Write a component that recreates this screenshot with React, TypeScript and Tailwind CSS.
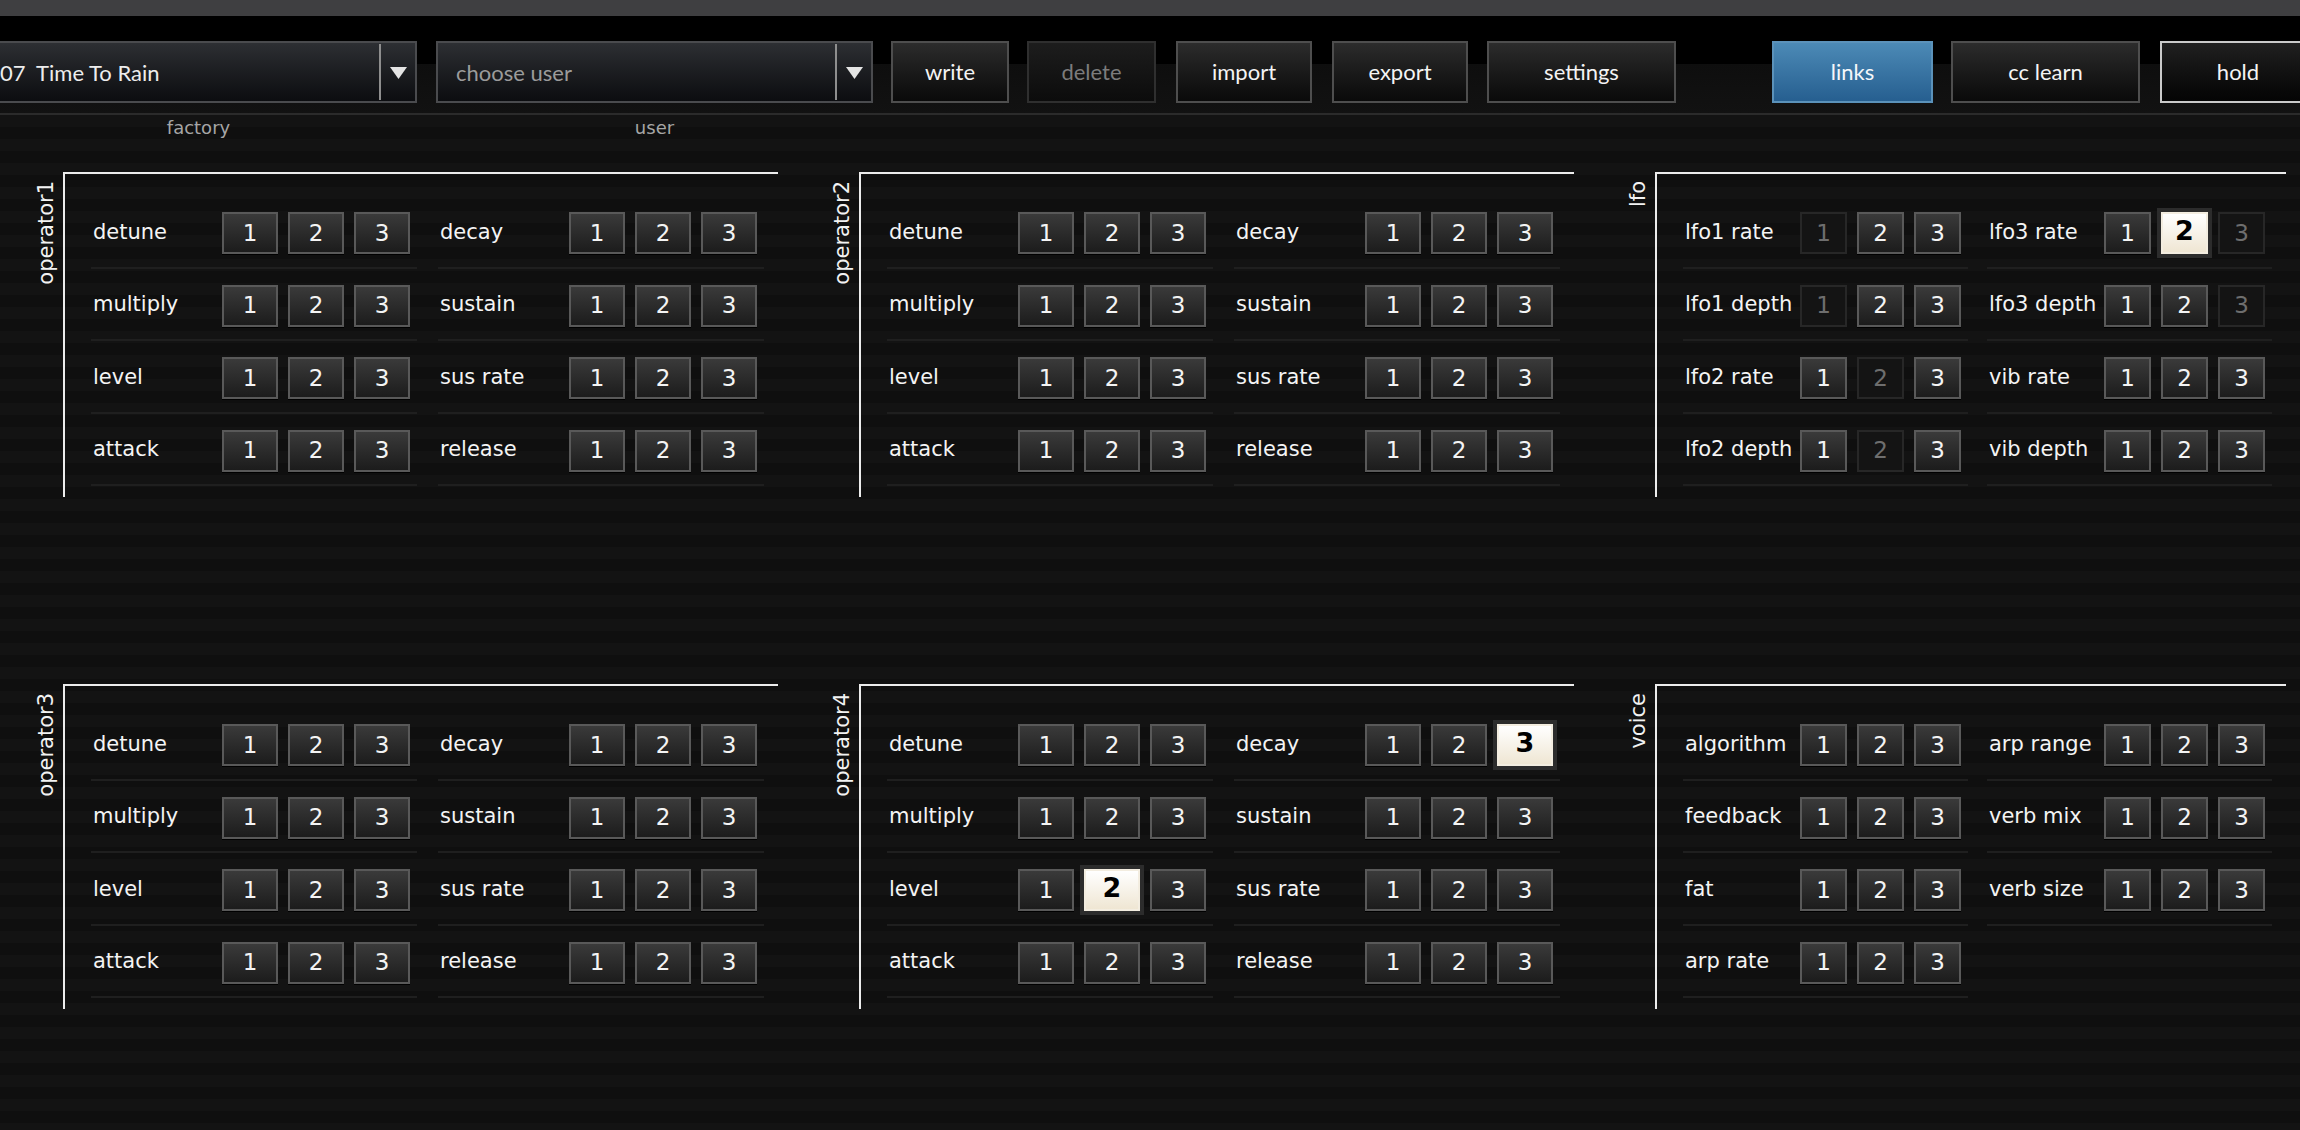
import React from 'react';

type Param = { name: string; off?: number[]; on?: number };
type Column = Param[];

const opRows = (on: Record<string, number> = {}): Column[] => [
  ['detune', 'multiply', 'level', 'attack'].map((name) => ({ name, on: on[name] })),
  ['decay', 'sustain', 'sus rate', 'release'].map((name) => ({ name, on: on[name] })),
];

const lfoCols: Column[] = [
  [
    { name: 'lfo1 rate', off: [1] },
    { name: 'lfo1 depth', off: [1] },
    { name: 'lfo2 rate', off: [2] },
    { name: 'lfo2 depth', off: [2] },
  ],
  [
    { name: 'lfo3 rate', on: 2, off: [3] },
    { name: 'lfo3 depth', off: [3] },
    { name: 'vib rate' },
    { name: 'vib depth' },
  ],
];

const voiceCols: Column[] = [
  [{ name: 'algorithm' }, { name: 'feedback' }, { name: 'fat' }, { name: 'arp rate' }],
  [{ name: 'arp range' }, { name: 'verb mix' }, { name: 'verb size' }],
];

const ValueButton = ({ n, state, wide }: { n: number; state: 'on' | 'off' | 'idle'; wide: boolean }) => {
  const size = wide ? 'w-[56px] h-[42px]' : 'w-[47px] h-[42px]';
  if (state === 'on') {
    return (
      <div
        className={`${size} flex items-center justify-center border-2 border-[#f3ede0] bg-linear-to-b from-[#ffffff] to-[#efe6d3] outline-[4px] outline-solid outline-[#2c2c2c] text-[27px] font-bold leading-none text-black pb-[5px]`}
      >
        {n}
      </div>
    );
  }
  if (state === 'off') {
    return (
      <div
        className={`${size} flex items-center justify-center border-2 border-[#272727] bg-[#141414] text-[23px] leading-none text-[#6e6e6e]`}
      >
        {n}
      </div>
    );
  }
  return (
    <div
      className={`${size} flex items-center justify-center border-2 border-[#595959] bg-linear-to-b from-[#3a3a3a] via-[#2b2b2b] to-[#1c1c1c] text-[23px] leading-none text-[#f4f4f4] shadow-[0_1px_0_#000]`}
    >
      {n}
    </div>
  );
};

const Panel = ({ title, cols, wide }: { title: string; cols: Column[]; wide: boolean }) => (
  <div className="flex shrink-0">
    <div className="w-[40px] flex items-start justify-end pr-[6px] pt-[9px]">
      <div className="[writing-mode:vertical-rl] rotate-180 text-[21px] leading-none text-[#f2f2f2]">{title}</div>
    </div>
    <div
      className={`${wide ? 'w-[715px] gap-[21px]' : 'w-[631px] gap-[19px]'} h-[325px] flex border-l-2 border-t-2 border-[#ececec] pl-[26px] pt-[22px]`}
    >
      {cols.map((col, ci) => (
        <div key={ci} className={`${wide ? 'w-[326px]' : 'w-[285px]'} flex flex-col`}>
          {col.map((p) => (
            <div key={p.name} className="h-[72.5px] shrink-0 border-b-2 border-[#1f1f1f] pt-[16px] pl-[2px]">
              <div className="flex h-[42px] items-center">
                <div className={`${wide ? 'w-[129px]' : 'w-[115px]'} text-[21px] leading-none text-[#f4f4f4] pb-[2px]`}>
                  {p.name}
                </div>
                <div className="flex gap-[10px]">
                  {[1, 2, 3].map((n) => (
                    <ValueButton
                      key={n}
                      n={n}
                      wide={wide}
                      state={p.on === n ? 'on' : p.off?.includes(n) ? 'off' : 'idle'}
                    />
                  ))}
                </div>
              </div>
            </div>
          ))}
        </div>
      ))}
    </div>
  </div>
);

const Dropdown = ({ text, muted, className }: { text: string; muted?: boolean; className: string }) => (
  <div
    className={`${className} shrink-0 w-[437px] h-[62px] flex border-2 border-[#4a4b4e] bg-linear-to-b from-[#2d2f33] to-[#0c0d10]`}
  >
    <div
      className={`flex-1 flex items-center pl-[18px] text-[22px] whitespace-pre ${muted ? 'text-[#9b9b9b]' : 'text-[#ededed]'}`}
    >
      {text}
    </div>
    <div className="w-[2px] my-[1px] bg-[#8e8e8e]" />
    <div className="w-[34px] flex items-center justify-center pt-[2px]">
      <svg width="17" height="12" viewBox="0 0 17 12">
        <polygon points="0,0 17,0 8.5,12" fill="#e4e4e4" />
      </svg>
    </div>
  </div>
);

const ToolButton = ({
  label,
  className,
  variant = 'normal',
}: {
  label: string;
  className: string;
  variant?: 'normal' | 'disabled' | 'blue' | 'hold';
}) => {
  const look = {
    normal: 'border-[#4e4e4e] from-[#2c2c2c] to-[#0a0a0a] text-[#f4f4f4]',
    disabled: 'border-[#2f2f2f] from-[#1d1d1d] to-[#0c0c0c] text-[#7c7c7c]',
    blue: 'border-[#5b92ba] from-[#4c8ab6] to-[#265f90] text-[#f4f7fa]',
    hold: 'border-[#cacaca] from-[#202020] to-[#050505] text-[#f4f4f4]',
  }[variant];
  return (
    <div
      className={`${className} ${look} shrink-0 h-[62px] border-2 bg-linear-to-b flex items-center justify-center text-[22px] pb-[2px]`}
    >
      {label}
    </div>
  );
};

export default function App() {
  return (
    <div className="w-[2300px] h-[1130px] overflow-hidden bg-[#111111] font-['DejaVu_Sans',sans-serif]">
      <div className="h-[16px] bg-[#3f3f41]" />

      {/* toolbar */}
      <div className="h-[97px] pt-[25px] flex bg-[linear-gradient(to_bottom,#000_0px,#000_48px,#0e0e0e_48px,#121212_100%)] font-['Lato',sans-serif] overflow-hidden">
        <Dropdown className="ml-[-20px]" text="07  Time To Rain" />
        <Dropdown className="ml-[19px]" text="choose user" muted />
        <ToolButton className="ml-[18px] w-[118px]" label="write" />
        <ToolButton className="ml-[18px] w-[129px]" label="delete" variant="disabled" />
        <ToolButton className="ml-[20px] w-[136px]" label="import" />
        <ToolButton className="ml-[20px] w-[136px]" label="export" />
        <ToolButton className="ml-[19px] w-[189px]" label="settings" />
        <ToolButton className="ml-[96px] w-[161px]" label="links" variant="blue" />
        <ToolButton className="ml-[18px] w-[189px]" label="cc learn" />
        <ToolButton className="ml-[20px] w-[156px]" label="hold" variant="hold" />
      </div>
      <div className="h-[2px] bg-[#2b2b2b]" />

      <div className="h-[1015px] bg-[repeating-linear-gradient(to_bottom,#131313_0px,#131313_12px,#0f0f0f_12px,#0f0f0f_24px)]">
        {/* bank labels */}
        <div className="flex h-[25px] items-center text-[18px] text-[#a6a6a6]">
          <div className="ml-[-20px] w-[437px] text-center">factory</div>
          <div className="ml-[19px] w-[437px] text-center">user</div>
        </div>

        <div className="pt-[32px] pl-[23px] flex flex-col gap-[187px]">
          <div className="flex gap-[41px]">
            <Panel title="operator1" cols={opRows()} wide />
            <Panel title="operator2" cols={opRows()} wide />
            <Panel title="lfo" cols={lfoCols} wide={false} />
          </div>
          <div className="flex gap-[41px]">
            <Panel title="operator3" cols={opRows()} wide />
            <Panel title="operator4" cols={opRows({ level: 2, decay: 3 })} wide />
            <Panel title="voice" cols={voiceCols} wide={false} />
          </div>
        </div>
      </div>
    </div>
  );
}
